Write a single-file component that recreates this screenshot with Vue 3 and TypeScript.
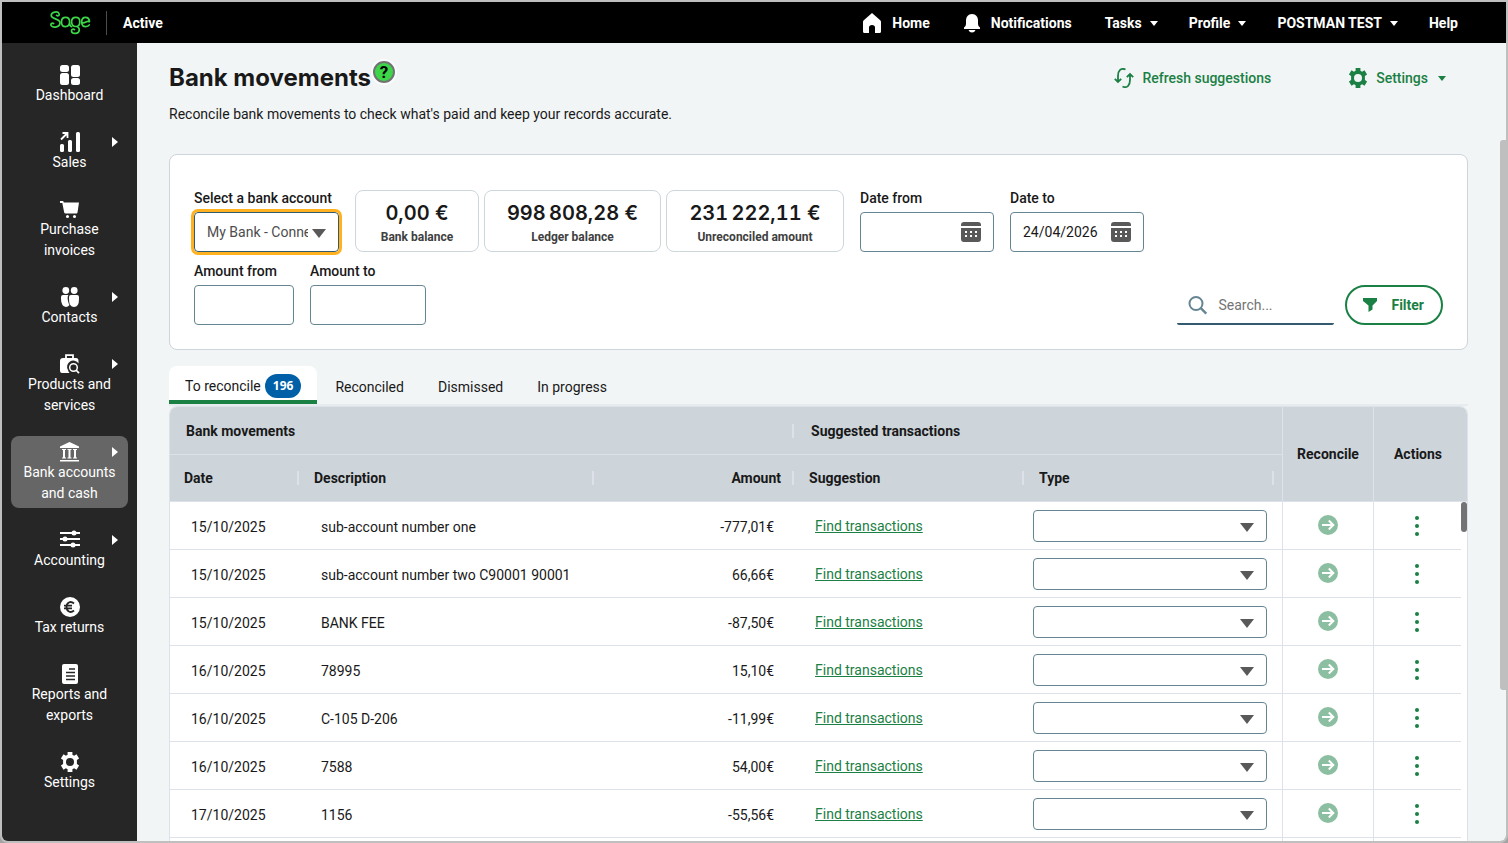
<script setup lang="ts">
import { ref } from 'vue'

interface SideItem {
  label: string
  icon: string
  arrow?: boolean
  active?: boolean
}
interface Movement {
  date: string
  description: string
  amount: string
}

const sideItems: SideItem[] = [
  { label: 'Dashboard', icon: 'dashboard' },
  { label: 'Sales', icon: 'sales', arrow: true },
  { label: 'Purchase invoices', icon: 'cart' },
  { label: 'Contacts', icon: 'contacts', arrow: true },
  { label: 'Products and services', icon: 'products', arrow: true },
  { label: 'Bank accounts and cash', icon: 'bank', arrow: true, active: true },
  { label: 'Accounting', icon: 'accounting', arrow: true },
  { label: 'Tax returns', icon: 'tax' },
  { label: 'Reports and exports', icon: 'reports' },
  { label: 'Settings', icon: 'gear' },
]

const stats = [
  { value: '0,00 €', label: 'Bank balance' },
  { value: '998\u2009808,28 €', label: 'Ledger balance' },
  { value: '231\u2009222,11 €', label: 'Unreconciled amount' },
]

const tabs = ['Reconciled', 'Dismissed', 'In progress']

const movements: Movement[] = [
  { date: '15/10/2025', description: 'sub-account number one', amount: '-777,01€' },
  { date: '15/10/2025', description: 'sub-account number two C90001 90001', amount: '66,66€' },
  { date: '15/10/2025', description: 'BANK FEE', amount: '-87,50€' },
  { date: '16/10/2025', description: '78995', amount: '15,10€' },
  { date: '16/10/2025', description: 'C-105 D-206', amount: '-11,99€' },
  { date: '16/10/2025', description: '7588', amount: '54,00€' },
  { date: '17/10/2025', description: '1156', amount: '-55,56€' },
]

const dateFrom = ref('')
const dateTo = ref('24/04/2026')
const amountFrom = ref('')
const amountTo = ref('')
const search = ref('')

const gearPath =
  'M7.6 0h4.8v2.7l1.7 1 2.4-1.4 2.6 4.2-2.2 1.4v4.2l2.2 1.4-2.6 4.2-2.4-1.4-1.7 1V20H7.6v-2.7l-1.7-1-2.4 1.4L.9 13.500l2.2-1.400V7.900L.9 6.500l2.600-4.200 2.400 1.400 1.700-1z M10 6a4 4 0 1 0 0 8a4 4 0 1 0 0-8z'
</script>

<template>
  <div class="window">
    <header class="topbar">
      <a href="#" class="brand" aria-label="Sage">
        <svg width="41" height="24" viewBox="0 0 41 24" fill="none" stroke="#3cd648" stroke-width="1.700" stroke-linecap="round">
          <path d="M6.600 4.300C8 5.500 9.800 4.400 9 2.500C8.100 0.200 1.200 0.300 1.200 4.500C1.200 8.700 10 7 10 11.800C10 16.500 3.200 17 1.300 14.800C0.200 13.200 1.800 11.500 3.600 12.600" />
          <path d="M19.600 10.800C19.600 8.300 18 6.400 15.600 6.400C13.100 6.400 11.500 8.300 11.500 10.900C11.500 13.500 13 15.600 15.400 15.600C17.800 15.600 19.600 13.800 19.600 10.800C19.600 13.600 20 15.500 21.600 15.600" />
          <path d="M26 15.500C23.500 15.500 21.600 13.700 21.600 11C21.600 8.200 23.300 6.400 25.800 6.400C28.200 6.400 29.800 8.200 29.800 10.700C29.800 13.800 28 15.500 26 15.500C28.500 15.700 29.400 17.600 29.200 19.300C28.800 23.300 21.800 23.400 21.500 20C21.400 18.300 23.200 17.500 24.500 18.700" />
          <path d="M32 11.500C34.500 12.800 36.300 10 38 10.400C39.500 10.900 39.700 11 39.400 9.800C39 7.800 37.600 6.400 35.700 6.400C33.300 6.400 31.700 8.300 31.700 10.900C31.700 13.600 33.300 15.600 35.800 15.600C37.500 15.600 38.600 15 39.300 13.900" />
        </svg>
      </a>
      <span class="product">Active</span>
      <nav class="topnav" aria-label="Main">
        <a href="#" class="iconlink">
          <svg width="20" height="20" viewBox="0 0 20 20" fill="#fff"><path d="M10 0L18.500 7.500Q19 8 19 9V18.500Q19 20 17.500 20H13V14.500Q13 12 10 12T7 14.500V20H2.500Q1 20 1 18.500V9Q1 8 1.500 7.500z" /></svg>
          Home
        </a>
        <a href="#" class="iconlink">
          <svg width="18" height="20" viewBox="0 0 18 20" fill="#fff"><path d="M9 1C13 1 15 4 15 7.500V11Q15 13 17 14.500V16H1V14.500Q3 13 3 11V7.500C3 4 5 1 9 1zM5.500 17h7q-1 2.500-3.500 2.500T5.500 17z" /></svg>
          Notifications
        </a>
        <button type="button">Tasks<i class="caret"></i></button>
        <button type="button">Profile<i class="caret"></i></button>
        <button type="button">POSTMAN TEST<i class="caret"></i></button>
        <a href="#">Help</a>
      </nav>
    </header>

    <div class="body">
      <nav class="sidebar" aria-label="Sections">
        <a v-for="item in sideItems" :key="item.label" href="#" class="side-item" :class="{ active: item.active }">
          <svg width="20" height="20" viewBox="0 0 20 20" fill="#fff">
            <template v-if="item.icon === 'dashboard'">
              <rect x="0" y="0" width="9" height="7" rx="2.500" /><rect x="0" y="8" width="9" height="12" rx="2.500" />
              <rect x="11" y="0" width="9" height="12" rx="2.500" /><rect x="11" y="13" width="9" height="7" rx="2.500" />
            </template>
            <template v-else-if="item.icon === 'sales'">
              <rect x="0" y="12" width="4" height="8" rx="1.500" /><rect x="8" y="8" width="4" height="12" rx="1.500" />
              <rect x="16" y="0" width="4" height="20" rx="1.500" />
              <path d="M1 7.500L7 1.500M2.500 1H7.500V6" fill="none" stroke="#fff" stroke-width="1.800" />
            </template>
            <template v-else-if="item.icon === 'cart'">
              <path d="M0 2H3.200L3.800 3.500H19L17.500 13.500Q17.300 14.500 16.500 14.500H5.500Q4.500 14.500 4.200 13.500L2.300 4H0z" />
              <circle cx="7.500" cy="17.500" r="1.500" /><circle cx="14.500" cy="17.500" r="1.500" />
            </template>
            <template v-else-if="item.icon === 'contacts'">
              <circle cx="5.800" cy="3.500" r="3.400" /><circle cx="14.200" cy="3.500" r="3.400" />
              <path d="M3 8H8.500Q7.300 9 7.800 13Q8.500 17 9.500 18Q8 20 6 20Q1 19 1 12V10Q1 8 3 8z" />
              <path d="M11 8H17Q19 8 19 10V12Q19 20 14 20T9 12V10Q9 8 11 8z" />
            </template>
            <template v-else-if="item.icon === 'products'">
              <path d="M6 4V1.200H13V4" fill="none" stroke="#fff" stroke-width="1.800" />
              <path d="M3 4H16Q18.500 4 18.500 7V9.500A6 6 0 0 0 8 16Q8.500 18 9.500 19H2Q0 19 0 17V7Q0 4 3 4z" />
              <circle cx="13.500" cy="13.500" r="3.800" fill="none" stroke="#fff" stroke-width="1.500" />
              <path d="M16 16L19 19.200" stroke="#fff" stroke-width="1.800" />
            </template>
            <template v-else-if="item.icon === 'bank'">
              <path d="M9.500 0L19 4.500V6H0V4.500zM0 18H19V19.500H0z" />
              <path d="M2 7.500H6M2 16H6M7.500 7.500H11.500M7.500 16H11.500M13 7.500H17M13 16H17" stroke="#fff" stroke-width="1.200" />
              <path d="M4 7.500V16M9.500 7.500V16M15 7.500V16" stroke="#fff" stroke-width="2" />
            </template>
            <template v-else-if="item.icon === 'accounting'">
              <path d="M0 3H20M0 9H20M0 15H20" stroke="#fff" stroke-width="2" />
              <circle cx="14" cy="3" r="2.500" /><circle cx="5" cy="9" r="2.500" /><circle cx="13" cy="15" r="2.500" />
            </template>
            <template v-else-if="item.icon === 'tax'">
              <circle cx="10" cy="10" r="10" />
              <path d="M14 6.500C10.500 3.500 6.500 5.500 6.500 10S10.500 16.500 14 13.500M4 8.700H12M4 11.300H12" fill="none" stroke="#262626" stroke-width="1.800" />
            </template>
            <template v-else-if="item.icon === 'reports'">
              <rect x="2" y="0" width="16" height="20" rx="2" />
              <path d="M9 5H15M6 8.500H15M6 12H15M6 15.500H15" stroke="#262626" stroke-width="1.600" />
            </template>
            <path v-else :d="gearPath" fill-rule="evenodd" />
          </svg>
          <span>{{ item.label }}</span>
          <i v-if="item.arrow" class="side-arrow"></i>
        </a>
      </nav>

      <main class="content">
        <div class="heading">
          <h1>Bank movements</h1>
          <button type="button" class="help" aria-label="Help with bank movements">?</button>
          <div class="actions">
            <button type="button" class="link-btn">
              <svg width="20" height="20" viewBox="0 0 20 20" fill="none" stroke="#1a8044" stroke-width="1.800">
                <path d="M11.500 1.500C7 -0.500 4 2.500 4 8V13.500M0.800 10.800L4 14L7.200 10.800M8.500 18.500C13 20.500 16 17.500 16 12V6.500M12.800 9.200L16 6L19.200 9.200" />
              </svg>
              Refresh suggestions
            </button>
            <button type="button" class="link-btn">
              <svg width="20" height="20" viewBox="0 0 20 20" fill="#1a8044"><path :d="gearPath" fill-rule="evenodd" /></svg>
              Settings<i class="caret"></i>
            </button>
          </div>
        </div>
        <p class="intro">Reconcile bank movements to check what's paid and keep your records accurate.</p>

        <section class="filters" aria-label="Filters">
          <div class="filter-row">
            <div class="field account">
              <label for="account">Select a bank account</label>
              <div class="select-box focused">
                <select id="account"><option>My Bank - Connected</option></select>
                <i class="drop"></i>
              </div>
            </div>
            <div class="stats">
              <div v-for="s in stats" :key="s.label" class="stat">
                <strong>{{ s.value }}</strong>
                <span>{{ s.label }}</span>
              </div>
            </div>
            <div class="field date">
              <label for="date-from">Date from</label>
              <div class="box">
                <input id="date-from" v-model="dateFrom" type="text" />
                <svg width="20" height="20" viewBox="0 0 20 20"><path d="M3 0H17Q20 0 20 3V4H0V3Q0 0 3 0zM0 6H20V17Q20 20 17 20H3Q0 20 0 17z" fill="#595959" /><path d="M4 10H16M4 14H16" stroke="#fff" stroke-width="2" stroke-dasharray="2 3" /></svg>
              </div>
            </div>
            <div class="field date">
              <label for="date-to">Date to</label>
              <div class="box">
                <input id="date-to" v-model="dateTo" type="text" />
                <svg width="20" height="20" viewBox="0 0 20 20"><path d="M3 0H17Q20 0 20 3V4H0V3Q0 0 3 0zM0 6H20V17Q20 20 17 20H3Q0 20 0 17z" fill="#595959" /><path d="M4 10H16M4 14H16" stroke="#fff" stroke-width="2" stroke-dasharray="2 3" /></svg>
              </div>
            </div>
          </div>
          <div class="filter-row">
            <div class="field amount-from">
              <label for="amount-from">Amount from</label>
              <div class="box"><input id="amount-from" v-model="amountFrom" type="text" /></div>
            </div>
            <div class="field amount-to">
              <label for="amount-to">Amount to</label>
              <div class="box"><input id="amount-to" v-model="amountTo" type="text" /></div>
            </div>
            <div class="search">
              <svg width="20" height="20" viewBox="0 0 20 20" fill="none" stroke="#668592" stroke-width="2"><circle cx="8" cy="8.500" r="6.500" /><path d="M12.800 13.200L18.300 18.700" stroke-width="2.400" /></svg>
              <input v-model="search" type="text" placeholder="Search..." aria-label="Search" />
            </div>
            <button type="button" class="filter-btn">
              <svg width="16" height="16" viewBox="0 0 16 16" fill="#1a8044"><path d="M1 1H15V4L10.500 8.500V12.500L6.500 15V8.500L1 4z" /></svg>
              Filter
            </button>
          </div>
        </section>

        <div class="tabs" role="tablist">
          <button type="button" role="tab" aria-selected="true" class="tab current">To reconcile<b>196</b></button>
          <button v-for="t in tabs" :key="t" type="button" role="tab" aria-selected="false" class="tab">{{ t }}</button>
        </div>

        <div class="card">
          <table>
            <colgroup>
              <col class="c-date" /><col class="c-desc" /><col class="c-amount" /><col class="c-sugg" />
              <col class="c-type" /><col class="c-rec" /><col class="c-act" />
            </colgroup>
            <thead>
              <tr>
                <th colspan="3" scope="colgroup" class="group sep">Bank movements</th>
                <th colspan="2" scope="colgroup" class="group">Suggested transactions</th>
                <th rowspan="2" scope="col" class="mid">Reconcile</th>
                <th rowspan="2" scope="col" class="mid last">Actions</th>
              </tr>
              <tr>
                <th scope="col" class="sep">Date</th>
                <th scope="col" class="sep">Description</th>
                <th scope="col" class="sep right">Amount</th>
                <th scope="col" class="sep">Suggestion</th>
                <th scope="col" class="sep inset">Type</th>
              </tr>
            </thead>
            <tbody>
              <tr v-for="(m, i) in movements" :key="i">
                <td>{{ m.date }}</td>
                <td>{{ m.description }}</td>
                <td class="right">{{ m.amount }}</td>
                <td class="link-cell"><a href="#">Find transactions</a></td>
                <td class="type-cell">
                  <div class="select-box small">
                    <select :aria-label="'Type for ' + m.description"><option></option></select>
                    <i class="drop"></i>
                  </div>
                </td>
                <td class="mid go">
                  <button type="button" :aria-label="'Reconcile ' + m.description">
                    <svg width="20" height="20" viewBox="0 0 20 20"><circle cx="10" cy="10" r="10" fill="#8cbfa1" /><path d="M4 10H15M10.800 5.500L15.300 10L10.800 14.500" fill="none" stroke="#fff" stroke-width="2" /></svg>
                  </button>
                </td>
                <td class="mid last">
                  <button type="button" :aria-label="'Actions for ' + m.description">
                    <svg width="20" height="20" viewBox="0 0 20 20" fill="#1a8044"><circle cx="10" cy="2" r="2" /><circle cx="10" cy="10" r="2" /><circle cx="10" cy="18" r="2" /></svg>
                  </button>
                </td>
              </tr>
              <tr><td></td><td></td><td></td><td></td><td></td><td class="mid"></td><td class="mid"></td></tr>
            </tbody>
          </table>
          <div class="card-track"><div class="card-thumb"></div></div>
        </div>
        <div class="page-thumb"></div>
      </main>
    </div>
  </div>
</template>

<style>
body {
  background: #a3a3a3;
}
</style>

<style scoped>
* {
  box-sizing: border-box;
}
.window {
  display: flex;
  flex-direction: column;
  height: 100vh;
  border: 2px solid #bfbfbf;
  border-radius: 0 0 8px 8px;
  overflow: hidden;
  font: 14px/21px Roboto, "Liberation Sans", sans-serif;
  color: #191919;
}
button {
  border: 0;
  padding: 0;
  background: none;
  font: inherit;
  color: inherit;
}
a {
  color: inherit;
  text-decoration: none;
}
svg {
  display: block;
  flex: none;
}
.topbar {
  display: flex;
  align-items: center;
  flex: none;
  height: 41px;
  padding: 1px 48px 0;
  background: #000;
  color: #fff;
  font-weight: 700;
}
.brand {
  padding-right: 15px;
  border-right: 1px solid #4d4d4d;
}
.product {
  margin-left: 16px;
}
.topnav {
  display: flex;
  align-items: center;
  gap: 31px;
  margin-left: auto;
}
.topnav a,
.topnav button {
  display: flex;
  align-items: center;
  white-space: nowrap;
}
.topnav .iconlink {
  gap: 10px;
  margin-right: 2px;
}
.caret {
  margin-left: 8px;
  border: 4px solid transparent;
  border-top: 5px solid currentColor;
  border-bottom: 0;
}
.body {
  display: flex;
  flex: 1;
  min-height: 0;
}
.sidebar {
  display: flex;
  flex-direction: column;
  gap: 16px;
  flex: none;
  width: 135px;
  padding: 16px 9px;
  background: #262626;
  color: #fff;
}
.side-item {
  position: relative;
  display: flex;
  flex-direction: column;
  align-items: center;
  padding: 6px 8px 4px;
  border-radius: 8px;
  text-align: center;
}
.side-item.active {
  background: #666;
}
.side-arrow {
  position: absolute;
  top: 11px;
  right: 10px;
  border: 5px solid transparent;
  border-left: 6px solid #fff;
  border-right: 0;
}
.content {
  position: relative;
  flex: 1;
  min-width: 0;
  padding: 16px 38px 0 32px;
  background: #f2f5f6;
  overflow: hidden;
}
.heading {
  display: flex;
  align-items: center;
  height: 38px;
}
h1 {
  margin: 0;
  font: 700 24px/32px Inter, "Noto Sans", sans-serif;
}
.help {
  width: 22px;
  height: 22px;
  margin: 0 0 12px 2px;
  border: 2px solid #737373;
  border-radius: 50%;
  background: #3cd648;
  color: #000;
  font-size: 17px;
  font-weight: 700;
  line-height: 18px;
  box-shadow: 0 0 0 2px #fafbfc;
}
.actions {
  display: flex;
  gap: 77px;
  margin-left: auto;
  padding-right: 22px;
}
.link-btn {
  display: flex;
  align-items: center;
  gap: 8px;
  color: #1a8044;
  font-weight: 500;
}
.link-btn .caret {
  margin-left: 2px;
}
.intro {
  margin: 7px 0 0;
}
.filters {
  display: flex;
  flex-direction: column;
  gap: 9px;
  margin-top: 29px;
  padding: 33px 24px 24px;
  border: 1px solid #ccd6db;
  border-radius: 8px;
  background: #fff;
}
.filter-row {
  display: flex;
  align-items: flex-end;
  gap: 16px;
}
.field {
  display: flex;
  flex-direction: column;
  gap: 3px;
}
.field label {
  font-weight: 500;
  white-space: nowrap;
}
.account {
  width: 145px;
}
.date {
  width: 134px;
}
.amount-from {
  width: 100px;
}
.amount-to {
  width: 116px;
}
.box,
.select-box {
  display: flex;
  align-items: center;
  height: 40px;
  border: 1px solid #668592;
  border-radius: 4px;
  background: #fff;
}
.box {
  padding: 0 12px;
}
.select-box {
  position: relative;
}
.select-box.focused {
  outline: 3px solid #ffb11f;
  border-color: #335b70;
}
.select-box.small {
  height: 32px;
}
.drop {
  position: absolute;
  right: 12px;
  top: 50%;
  margin-top: -3px;
  border: 7px solid transparent;
  border-top: 9px solid #595959;
  border-bottom: 0;
  pointer-events: none;
}
select {
  width: 100%;
  height: 100%;
  padding: 0 30px 0 12px;
  border: 0;
  background: none;
  color: #4d4d4d;
  font: inherit;
  appearance: none;
  outline: 0;
}
input {
  flex: 1;
  width: 0;
  min-width: 0;
  height: 100%;
  padding: 0;
  border: 0;
  background: none;
  color: #191919;
  font: inherit;
  outline: 0;
}
.stats {
  display: grid;
  grid-template-columns: 124px 177px 178px;
  gap: 5px;
}
.stat {
  display: flex;
  flex-direction: column;
  align-items: center;
  height: 62px;
  padding: 8px 0;
  border: 1px solid #ccd6db;
  border-radius: 8px;
  white-space: nowrap;
}
.stat strong {
  font: 600 20px/28px Inter, "Noto Sans", sans-serif;
  font-variant-numeric: tabular-nums;
}
.stat span {
  color: #404040;
  font-size: 12px;
  font-weight: 700;
  line-height: 20px;
}
.search {
  display: flex;
  align-items: center;
  gap: 10px;
  width: 157px;
  height: 40px;
  margin-left: auto;
  margin-right: -5px;
  padding: 2px 0 0 11px;
  border-bottom: 2px solid #335b70;
  border-radius: 2px;
}
.search input::placeholder {
  color: #737373;
  opacity: 1;
}
.filter-btn {
  display: flex;
  align-items: center;
  gap: 13px;
  height: 40px;
  padding: 0 17px 0 15px;
  border: 2px solid #1a8044;
  border-radius: 20px;
  color: #1a8044;
  font-weight: 700;
}
.tabs {
  display: flex;
  gap: 2px;
  margin-top: 16px;
  border-bottom: 2px solid #e6ebed;
}
.tab {
  height: 38px;
  padding: 4px 16px 0;
}
.tab.current {
  display: flex;
  align-items: center;
  padding: 6px 16px 0;
  border-bottom: 4px solid #1a8044;
  border-radius: 8px 8px 0 0;
  background: #fff;
}
.tab b {
  margin-left: 4px;
  padding: 0 8px;
  border-radius: 12px;
  background: #0060a7;
  color: #fff;
  font: 700 12px/24px "Noto Sans", sans-serif;
}
.card {
  position: relative;
  border: 1px solid #dde2ea;
  border-radius: 8px 8px 0 0;
  background: #fff;
  overflow: hidden;
}
table {
  width: 100%;
  table-layout: fixed;
  border-collapse: separate;
  border-spacing: 0;
}
.c-date { width: 130px; }
.c-desc { width: 295px; }
.c-amount { width: 200px; }
.c-sugg { width: 230px; }
.c-rec { width: 91px; }
.c-act { width: 94px; }
th {
  position: relative;
  height: 47px;
  padding: 0 14px;
  border-bottom: 1px solid #dde2ea;
  background: #cdd5db;
  font-weight: 700;
  text-align: left;
}
thead tr:first-child th {
  height: 48px;
}
th.group {
  padding-top: 2px;
  padding-left: 16px;
}
th.sep::after {
  content: "";
  position: absolute;
  top: 50%;
  right: 1px;
  width: 2px;
  height: 14px;
  margin-top: -7px;
  background: #dde2ea;
}
th.inset::after {
  right: 8px;
}
.right {
  text-align: right;
}
td {
  height: 48px;
  padding: 3px 21px 0;
  border-bottom: 1px solid #dde2ea;
  white-space: nowrap;
}
td.link-cell {
  padding: 1px 20px 0;
}
td a {
  color: #1a8044;
  text-decoration: underline;
}
td.type-cell {
  padding: 0 15px 0 8px;
}
th.mid,
td.mid {
  padding: 0;
  border-left: 1px solid #dde2ea;
  text-align: center;
}
td.go {
  padding-bottom: 2px;
}
th.last {
  padding-right: 5px;
}
td.last {
  padding-right: 8px;
}
td.mid button {
  display: inline-block;
  vertical-align: middle;
}
.card-track {
  position: absolute;
  top: 95px;
  right: 0;
  bottom: 0;
  width: 6px;
  background: #fff;
}
.card-thumb {
  height: 30px;
  border-radius: 3px;
  background: #737373;
}
.page-thumb {
  position: absolute;
  top: 97px;
  right: 0;
  width: 6px;
  height: 550px;
  border-radius: 3px 0 0 3px;
  background: #bfbfbf;
}
</style>
